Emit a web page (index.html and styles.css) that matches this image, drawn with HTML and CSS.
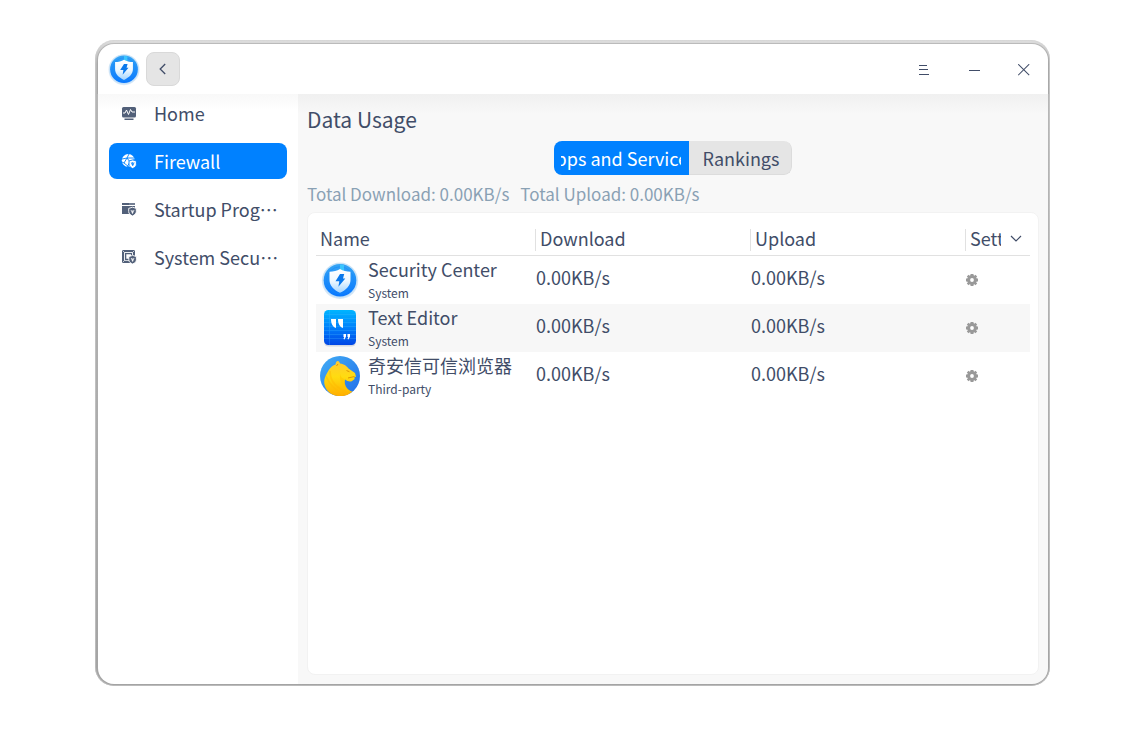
FILE: index.html
```html
<!DOCTYPE html>
<html lang="zh-CN">
<head>
<meta charset="utf-8">
<title>Security Center</title>
<link rel="stylesheet" href="styles.css">
</head>
<body>
<svg class="defs" width="0" height="0" aria-hidden="true">
  <defs>
    <linearGradient id="ring" x1="0" y1="0" x2="0" y2="1"><stop offset="0" stop-color="#35a5f4"/><stop offset="1" stop-color="#0877ff"/></linearGradient>
    <linearGradient id="plate" x1="0" y1="0" x2="0" y2="1"><stop offset="0" stop-color="#ffffff"/><stop offset=".5" stop-color="#edf8ff"/><stop offset="1" stop-color="#a4d6ff"/></linearGradient>
    <linearGradient id="page" x1="0" y1="0" x2="0" y2="1"><stop offset="0" stop-color="#00b5ff"/><stop offset=".5" stop-color="#0080fb"/><stop offset="1" stop-color="#0045e5"/></linearGradient>
    <linearGradient id="sky" x1="0" y1="0" x2="1" y2="1"><stop offset="0" stop-color="#42adf5"/><stop offset="1" stop-color="#216ee9"/></linearGradient>
    <linearGradient id="gold" x1="0" y1="0" x2="0" y2="1"><stop offset="0" stop-color="#ffc933"/><stop offset=".45" stop-color="#ffdc10"/><stop offset="1" stop-color="#ffae00"/></linearGradient>
    <symbol id="shield" viewBox="0 0 40 40">
      <circle cx="20" cy="20.8" r="18.2" fill="#8dbde8" opacity=".35"/>
      <circle cx="20" cy="20.3" r="17.400" fill="#c4e1f8"/>
      <circle cx="20" cy="20.3" r="16.300" fill="url(#ring)"/>
      <circle cx="20" cy="20.3" r="13.500" fill="none" stroke="#168afa" stroke-width="1" opacity=".6"/>
      <path d="M20 4.600a16 16 0 0 1 4 .5V12h-4z" fill="#3fd0ff" opacity=".8"/>
      <path d="M20 9C23 10.800 26.500 11.700 30.500 11.800V20c0 5.800-4.400 10-10.500 12.800C13.900 30 9.500 25.800 9.500 20v-8.200c4-.1 7.500-1 10.500-2.800z" fill="url(#plate)"/>
      <path d="M20 14h4.200l-1.200 4.500h2.300l-6.900 8.300.9-5.500h-3.800z" fill="#0878ec"/>
    </symbol>
    <symbol id="gear" viewBox="0 0 12 12">
      <g fill="#999"><path d="M2.600 .8l8.600 8.600-1.800 1.800L.8 2.600zM9.400 .8l1.800 1.800-8.600 8.600-1.800-1.800zM4.500 0h3v12h-3zM0 4.500h12v3H0z"/><circle cx="6" cy="6" r="4.900"/></g>
      <circle cx="6" cy="6" r="1.900" fill="#fff"/>
    </symbol>
  </defs>
</svg>
<div class="window">
  <header class="titlebar">
    <svg class="app-logo" width="34" height="34"><use href="#shield"/></svg>
    <button class="back" aria-label="Back"><svg width="10" height="14" viewBox="0 0 10 14" fill="none" stroke="#414d68" stroke-width="1.300"><path d="M7.200 2L2.200 7l5 5"/></svg></button>
    <svg class="win-menu" width="12" height="12" viewBox="0 0 12 12" stroke="#414d68" shape-rendering="crispEdges"><path d="M1 1.500h8M1 5.500h9M1 10.500h10"/></svg>
    <svg class="win-min" width="12" height="12" viewBox="0 0 12 12" stroke="#414d68" shape-rendering="crispEdges"><path d="M0 6.500h11"/></svg>
    <svg class="win-close" width="12" height="12" viewBox="0 0 12 12" stroke="#414d68" stroke-width="1.050"><path d="M.2.200l11 11M11.200.200l-11 11"/></svg>
  </header>
  <div class="body">
    <nav class="sidebar">
      <a class="nav-item">
        <svg width="16" height="14" viewBox="0 0 16 14"><rect x="1" y="1" width="14" height="10.500" rx="1.500" fill="#526079"/><path d="M3.500 12.500h9v1.500h-9z" fill="#526079"/><path d="M2 7h2l1.500-3 2 4.500 2-5L11 6h3" fill="none" stroke="#fff" stroke-width="1"/></svg>
        <span class="nav-label">Home</span>
      </a>
      <a class="nav-item active">
        <svg width="16" height="16" viewBox="0 0 16 16"><circle cx="7.300" cy="7.500" r="6.500" fill="#fff"/><g fill="none" stroke="#0081ff" stroke-width=".9"><path d="M1 6l5-1 3 4-3 5M6 5l2-4M6 5L3 10l5 4M9 9l5-3M6 5l7 0M3 10l-2-1"/></g><path d="M11.700 6.900l3.700 1.100v3.200c0 2-1.500 3.300-3.700 4.400-2.200-1.100-3.700-2.400-3.700-4.400V8z" fill="#fff" stroke="#0081ff" stroke-width=".9"/><path d="M10.300 9.500l1.400 3.200 1.400-3.200M11.700 9v3" fill="none" stroke="#0081ff" stroke-width=".9"/></svg>
        <span class="nav-label">Firewall</span>
      </a>
      <a class="nav-item">
        <svg width="16" height="16" viewBox="0 0 16 16"><path d="M1 2h13v2H1zM1 5h13v8H1z" fill="#526079"/><path d="M8.500 3h1M10.500 3h1M12.500 3h1" stroke="#fff" stroke-width=".8"/><path d="M11.500 6.200l3.800 1.200v3.200c0 2.100-1.600 3.300-3.800 4.400-2.200-1.100-3.800-2.300-3.800-4.400V7.400z" fill="#526079" stroke="#fff" stroke-width=".9"/><path d="M10 9l1.500 3.300L13 9M11.500 9.500v3" stroke="#fff" fill="none" stroke-width=".8"/></svg>
        <span class="nav-label">Startup Prog…</span>
      </a>
      <a class="nav-item">
        <svg width="16" height="16" viewBox="0 0 16 16"><rect x="1" y="1" width="13" height="13" rx=".6" fill="#526079"/><path d="M3.500 11.500v-8h8V6" fill="none" stroke="#fff" stroke-width=".9"/><path d="M1.500 1.500l2 2M13.500 1.500l-2 2M3.500 11.500l-2 2M3.500 11.500H8" fill="none" stroke="#fff" stroke-width=".7"/><path d="M5.300 5.300h4.700V7L8 9.800H5.300z" fill="#fff"/><path d="M11.600 6.400l3.800 1.200v3.200c0 2.100-1.600 3.200-3.800 4.200-2.200-1-3.800-2.100-3.800-4.200V7.600z" fill="#526079" stroke="#fff" stroke-width=".9"/><path d="M10.200 9l1.400 3.200L13 9M11.600 9.500v3" stroke="#fff" fill="none" stroke-width=".8"/></svg>
        <span class="nav-label">System Secu…</span>
      </a>
    </nav>
    <main class="content">
      <h1 class="title">Data Usage</h1>
      <div class="tabs">
        <button class="tab selected"><span class="tab-clip"><span>Apps and Services</span></span></button>
        <button class="tab">Rankings</button>
      </div>
      <div class="totals"><span>Total Download: 0.00KB/s</span><span>Total Upload: 0.00KB/s</span></div>
      <section class="card">
        <div class="row head">
          <span class="th first">Name</span><span class="th">Download</span><span class="th">Upload</span>
          <span class="th last"><span class="th-clip">Settings</span><svg width="12" height="8" viewBox="0 0 12 8" fill="none" stroke="#414d68" stroke-width="1.200"><path d="M1 1l5 5 5-5"/></svg></span>
        </div>
        <div class="row">
          <div class="app"><svg width="40" height="40"><use href="#shield"/></svg><div class="names"><span class="name">Security Center</span><span class="kind">System</span></div></div>
          <span class="rate">0.00KB/s</span><span class="rate">0.00KB/s</span><svg class="gear" width="12" height="12"><use href="#gear"/></svg>
        </div>
        <div class="row striped">
          <div class="app"><svg width="40" height="40" viewBox="0 0 40 40"><rect x="4" y="3.500" width="32" height="35" rx="4.500" fill="#bac3d3" opacity=".6"/><rect x="4" y="2" width="32" height="35" rx="4.500" fill="url(#page)"/><path d="M4 6.500h32M4 10.500h32M4 14.500h32M4 18.500h32M4 22.500h32M4 26.500h32M4 30.500h32M9.500 2v35" stroke="#47bfff" stroke-width=".6" opacity=".45"/><path d="M11 11h5v9c-3-1-5-4-5-9zM18 11h5v9c-3-1-5-4-5-9zM23.500 26h2.500v2.500l-1.500 3-1-.5.700-2h-.7zM27.500 26H30v2.500l-1.500 3-1-.5.700-2h-.7z" fill="#fff"/></svg><div class="names"><span class="name">Text Editor</span><span class="kind">System</span></div></div>
          <span class="rate">0.00KB/s</span><span class="rate">0.00KB/s</span><svg class="gear" width="12" height="12"><use href="#gear"/></svg>
        </div>
        <div class="row">
          <div class="app"><svg width="40" height="40" viewBox="0 0 40 40"><circle cx="20" cy="20" r="20" fill="url(#sky)"/><path d="M15.500 8.500c.5-4.300 3.500-4.500 4.500-1 4.500.5 6.500 2.500 8.500 5l6.500 4.500 1 3.800-1.700.5.400 1.700-3 2.200c-2.500.8-4.500-.2-6.700-1.700-1.500 5.500 1.500 10.500 7.500 12.300A20 20 0 0 1 12.500 38.500C6 35.500 2.500 27.500 5 21.500 7.500 15.500 10.500 10 15.500 8.500z" fill="url(#gold)"/><path d="M6 20c3 8 8 13.500 17 18.500M10 15c0 11 6 18 20 21.500" fill="none" stroke="#ffb900" stroke-width="1.800" opacity=".45"/><path d="M25 23.500c-3-1-4.500-3-5-5.500-.5 6 1.500 13 7 17.500l5 .3c-5-2-8-6.800-7-12.300z" fill="#ffc400" opacity=".6"/><path d="M26.500 14.500l3 1.300M28 22l6.500-1.500M18 8l-1.500 2" fill="none" stroke="#d98c00" stroke-width=".9"/></svg><div class="names"><span class="name">奇安信可信浏览器</span><span class="kind">Third-party</span></div></div>
          <span class="rate">0.00KB/s</span><span class="rate">0.00KB/s</span><svg class="gear" width="12" height="12"><use href="#gear"/></svg>
        </div>
      </section>
    </main>
  </div>
</div>
</body>
</html>
```
FILE: styles.css
```css
* { box-sizing: border-box; }
body {
  margin: 0;
  padding: 40px 0 0 95px;
  height: 734px;
  overflow: hidden;
  background: #fff;
  color: #414d68;
  font: 18px/26px "Noto Sans CJK SC", sans-serif;
}
button { border: 0; padding: 0; font: inherit; color: inherit; }
svg { display: block; flex: none; }
.defs { position: absolute; }
.window {
  width: 955px;
  height: 646px;
  padding: 4px 2px 2px 3px;
  border-radius: 19px;
  background: linear-gradient(#dedede 0, #b8b8b8 24px, #a4a4a4 100%);
  box-shadow: inset 0 0 0 1px rgba(210, 210, 210, .5);
}
.titlebar {
  display: flex;
  align-items: center;
  height: 50px;
  padding: 0 18px 0 9px;
  background: #fff;
  border-radius: 16px 16px 0 0;
  box-shadow: 0 0 0 1px rgba(150, 150, 150, .45);
  clip-path: inset(-2px -2px 0);
}
.back {
  display: grid;
  place-items: center;
  width: 34px;
  height: 34px;
  margin: 0 auto 0 5px;
  border: 1px solid #d9d9d9;
  border-radius: 8px;
  background: #e5e5e5;
}
.app-logo { margin: 0; }
.win-menu { margin: 2px 39px 0 0; }
.win-min { margin: 1px 37px 0 0; }
.win-close { margin: 2px 0 0; }
.body { display: flex; height: 590px; border-radius: 0 0 16px 16px; overflow: hidden; }
.sidebar {
  display: flex;
  flex-direction: column;
  gap: 12px;
  width: 200px;
  padding: 1px 11px;
  background: linear-gradient(#f8f8f8, #fff 16px);
}
.nav-item {
  display: flex;
  align-items: center;
  gap: 17px;
  height: 36px;
  padding: 0 0 0 12px;
  border-radius: 8px;
}
.nav-item.active { background: #0081ff; color: #fff; }
.nav-label { white-space: nowrap; }
.content {
  display: flex;
  flex-direction: column;
  flex: 1;
  padding: 13px 10px 10px 9px;
  background: linear-gradient(#f0f0f0, #f8f8f8 20px);
}
.title { margin: 0; font-size: 21px; font-weight: 400; line-height: 24px; }
.tabs {
  display: flex;
  align-self: center;
  width: 238px;
  height: 34px;
  margin: 10px 0 6px;
  border-radius: 8px;
  overflow: hidden;
}
.tab { width: 103px; padding-left: 3px; background: #e5e5e5; border: solid #dcdcdc; border-width: 0 1px 1px 0; border-radius: 0 8px 8px 0; }
.tab.selected { width: 135px; padding: 0 8px 0 7px; border: 0; border-radius: 0; background: #0081ff; color: #fff; }
.tab-clip { display: flex; justify-content: center; overflow: hidden; white-space: nowrap; }
.totals { display: flex; gap: 11px; font-size: 17px; color: #8aa1b4; }
.card {
  flex: 1;
  margin: 5px -1px -1px 0;
  padding: 11px 8px;
  border: 1px solid #f2f2f2;
  border-radius: 8px;
  background: #fff;
}
.row { display: grid; grid-template-columns: 216px 215px 215px 1fr; align-items: center; height: 48px; padding-left: 4px; }
.row.striped { background: #f7f7f7; }
.row.head { height: 32px; padding: 0; border-bottom: 1px solid #e1e1e1; grid-template-columns: 219px 215px 215px 1fr; }
.th { height: 22px; line-height: 19px; padding-left: 4px; border-left: 1px solid #e1e1e1; }
.th.first { border-color: transparent; padding-left: 3px; }
.th.last { display: flex; align-items: center; gap: 9px; }
.th.last svg { margin-top: -2px; }
.th-clip { width: 31px; height: 22px; line-height: 19px; overflow: hidden; white-space: nowrap; }
.app { display: flex; gap: 8px; height: 40px; }
.names { display: flex; flex-direction: column; }
.name { line-height: 26px; margin-top: -4px; white-space: nowrap; }
.kind { font-size: 12px; line-height: 18px; margin-top: 2px; }
.rate { margin-top: -6px; }
```
